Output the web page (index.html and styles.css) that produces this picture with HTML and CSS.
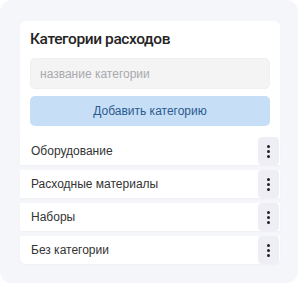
FILE: index.html
```html
<!DOCTYPE html>
<html lang="ru">
<head>
    <meta charset="UTF-8">
    <meta name="viewport" content="width=device-width, initial-scale=1.0">
    <title>Категории расходов</title>
    <link rel="stylesheet" href="styles.css">
</head>
<body>
    <div class="panel">
        <div class="card">
            <div class="card-head">
                <h2>Категории расходов</h2>
                <input class="cat-input" type="text" placeholder="название категории">
                <button class="add-btn">Добавить категорию</button>
            </div>
            <ul class="cat-list">
                <li class="cat-row"><span>Оборудование</span><button class="more-btn"><i></i><i></i><i></i></button></li>
                <li class="cat-row"><span>Расходные материалы</span><button class="more-btn"><i></i><i></i><i></i></button></li>
                <li class="cat-row"><span>Наборы</span><button class="more-btn"><i></i><i></i><i></i></button></li>
                <li class="cat-row"><span>Без категории</span><button class="more-btn"><i></i><i></i><i></i></button></li>
            </ul>
        </div>
    </div>
</body>
</html>
```

FILE: styles.css
```css
body {
    margin: 0;
    background: #fff;
    font-family: "Liberation Sans", Arial, sans-serif;
}
.panel {
    width: 298px;
    height: 283px;
    background: #f5f6fa;
    border-radius: 12px;
    padding: 21px 20px 0;
    box-sizing: border-box;
}
.card {
    width: 260px;
}
.card-head {
    background: #fff;
    border-radius: 6px 6px 0 0;
    padding: 9px 10px 11px;
    display: flex;
    flex-direction: column;
}
h2 {
    margin: 0 0 9px;
    font-family: Roboto, sans-serif;
    font-size: 15.5px;
    font-weight: 500;
    letter-spacing: -0.4px;
    color: #242424;
    line-height: 19px;
}
.cat-input {
    height: 31px;
    border: 1px solid #f0f0f0;
    border-radius: 5px;
    background: #f4f4f5;
    padding: 0 9px;
    font-family: inherit;
    font-size: 12px;
    box-sizing: border-box;
    outline: none;
}
.cat-input::placeholder {
    color: #a9a9ad;
}
.add-btn {
    margin-top: 7px;
    height: 30px;
    border: none;
    border-radius: 5px;
    background: #c6def6;
    color: #2c5a8e;
    font-family: inherit;
    font-size: 12px;
}
.cat-list {
    list-style: none;
    margin: 0;
    padding: 0;
    display: flex;
    flex-direction: column;
    gap: 5px;
}
.cat-row {
    height: 28px;
    background: #fff;
    display: flex;
    align-items: center;
    justify-content: space-between;
    padding-left: 11px;
    font-size: 12px;
    color: #333;
    box-shadow: 0 1px 2px rgba(0, 0, 0, 0.03);
}
.cat-row:last-child {
    border-radius: 0 0 6px 6px;
}
.more-btn {
    width: 21px;
    height: 28px;
    margin-right: 1px;
    border: none;
    border-radius: 4px;
    background: #efeef5;
    display: flex;
    flex-direction: column;
    align-items: center;
    justify-content: center;
    gap: 2px;
    padding: 0;
}
.more-btn i {
    width: 3px;
    height: 3px;
    border-radius: 50%;
    background: #222;
}
```
